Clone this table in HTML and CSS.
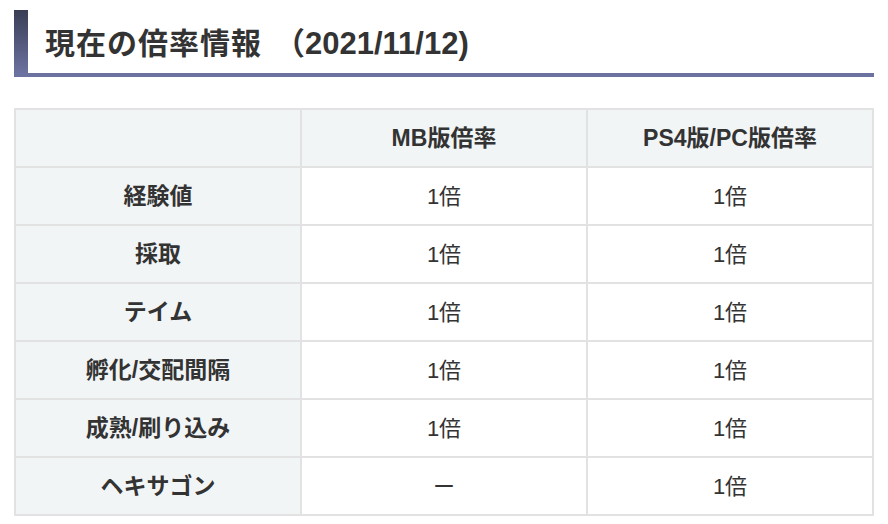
FILE: index.html
```html
<!DOCTYPE html>
<html lang="ja">
<head>
<meta charset="utf-8">
<link rel="stylesheet" href="styles.css">
</head>
<body>
<div class="page">
  <h2 class="heading"><span class="heading-title">現在の倍率情報</span><span class="heading-date">（2021/11/12)</span></h2>
  <table class="rates">
    <thead>
      <tr><th></th><th>MB版倍率</th><th>PS4版/PC版倍率</th></tr>
    </thead>
    <tbody>
      <tr><th>経験値</th><td>1倍</td><td>1倍</td></tr>
      <tr><th>採取</th><td>1倍</td><td>1倍</td></tr>
      <tr><th>テイム</th><td>1倍</td><td>1倍</td></tr>
      <tr><th>孵化/交配間隔</th><td>1倍</td><td>1倍</td></tr>
      <tr><th>成熟/刷り込み</th><td>1倍</td><td>1倍</td></tr>
      <tr><th>ヘキサゴン</th><td>ー</td><td>1倍</td></tr>
    </tbody>
  </table>
</div>
</body>
</html>
```
FILE: styles.css
```css
html, body {
  margin: 0;
  padding: 0;
  background: #ffffff;
}
body {
  font-family: "Liberation Sans", "Noto Sans CJK JP", sans-serif;
  color: #333333;
}
.page {
  padding: 10px 14px 0 14px;
}
.heading {
  margin: 0;
  display: flex;
  align-items: center;
  padding: 0 0 2px 31px;
  box-sizing: border-box;
  height: 67px;
  font-size: 30px;
  font-weight: bold;
  color: #333333;
  border-bottom: 4px solid #6b72a0;
  background: linear-gradient(#3a3e55, #6e75a3) no-repeat 0 0 / 14px 100%;
  background-origin: border-box;
  background-clip: border-box;
}
.heading-title {
  letter-spacing: 1px;
}
.heading-date {
  margin-left: 12px;
  font-size: 31px;
}
.rates {
  margin-top: 31px;
  width: 860px;
  table-layout: fixed;
  border-collapse: collapse;
  font-size: 22px;
}
.rates th, .rates td {
  border: 2px solid #e2e2e2;
  height: 51px;
  padding: 0 0 5px 0;
  text-align: center;
  vertical-align: middle;
  color: #333333;
}
.rates th {
  background: #f2f5f6;
  font-weight: bold;
  font-size: 23px;
}
.rates td {
  background: #ffffff;
  font-weight: normal;
}
```
